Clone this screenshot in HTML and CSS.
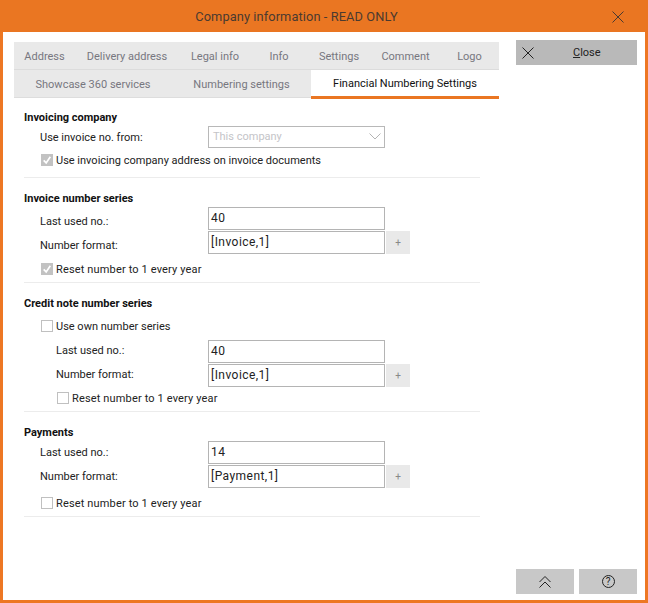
FILE: index.html
```html
<!DOCTYPE html>
<html lang="en">

<head>
  <meta charset="UTF-8">
  <title>Company information</title>
  <link rel="stylesheet" href="styles.css">
</head>

<body>
  <div class="window">
    <div class="titlebar">
      <span class="title">Company information - READ ONLY</span>
      <svg class="title-close" width="12" height="12" viewBox="0 0 12 12"><path d="M.5.5l11 11M11.5.5l-11 11" stroke="#4a3a30" fill="none"/></svg>
    </div>
    <div class="content">
      <div class="main">
        <div class="tab-row">
          <div class="tab tab-1">Address</div>
          <div class="tab tab-2">Delivery address</div>
          <div class="tab tab-3">Legal info</div>
          <div class="tab tab-4">Info</div>
          <div class="tab tab-5">Settings</div>
          <div class="tab tab-6">Comment</div>
          <div class="tab tab-7">Logo</div>
        </div>
        <div class="tab-row tab-row-two">
          <div class="tab tab-8">Showcase 360 services</div>
          <div class="tab tab-9">Numbering settings</div>
          <div class="tab tab-active">Financial Numbering Settings</div>
        </div>

        <div class="form">
          <section class="group group-first">
            <h3>Invoicing company</h3>
            <div class="row">
              <label>Use invoice no. from:</label>
              <div class="select">
                <span>This company</span>
                <svg width="12" height="7" viewBox="0 0 12 7"><path d="M.5.5l5.5 5.5 5.5-5.5" stroke="#b4b4b4" fill="none"/></svg>
              </div>
            </div>
            <div class="check-row">
              <span class="check checked"><svg width="12" height="12" viewBox="0 0 12 12"><path d="M2 6.5l3 3 5-7.5" stroke="#fff" stroke-width="2" fill="none"/></svg></span>
              Use invoicing company address on invoice documents
            </div>
          </section>

          <section class="group">
            <h3>Invoice number series</h3>
            <div class="rows rows-invoice">
              <div class="row">
                <label>Last used no.:</label>
                <div class="input">40</div>
              </div>
              <div class="row">
                <label>Number format:</label>
                <div class="input">[Invoice,1]</div>
                <div class="plus">+</div>
              </div>
            </div>
            <div class="check-row reset">
              <span class="check checked"><svg width="12" height="12" viewBox="0 0 12 12"><path d="M2 6.5l3 3 5-7.5" stroke="#fff" stroke-width="2" fill="none"/></svg></span>
              Reset number to 1 every year
            </div>
          </section>

          <section class="group group-credit">
            <h3>Credit note number series</h3>
            <div class="check-row check-row-own">
              <span class="check"></span>
              Use own number series
            </div>
            <div class="rows rows-indent">
              <div class="row">
                <label>Last used no.:</label>
                <div class="input">40</div>
              </div>
              <div class="row">
                <label>Number format:</label>
                <div class="input">[Invoice,1]</div>
                <div class="plus">+</div>
              </div>
            </div>
            <div class="check-row check-row-indent">
              <span class="check"></span>
              Reset number to 1 every year
            </div>
          </section>

          <section class="group">
            <h3>Payments</h3>
            <div class="rows rows-payment">
              <div class="row">
                <label>Last used no.:</label>
                <div class="input">14</div>
              </div>
              <div class="row">
                <label>Number format:</label>
                <div class="input">[Payment,1]</div>
                <div class="plus">+</div>
              </div>
            </div>
            <div class="check-row reset">
              <span class="check"></span>
              Reset number to 1 every year
            </div>
          </section>
        </div>
      </div>

      <div class="side">
        <button class="close-btn">
          <svg width="12" height="12" viewBox="0 0 12 12"><path d="M.5.5l11 11M11.5.5l-11 11" stroke="#222" fill="none"/></svg>
          <span><u>C</u>lose</span>
        </button>
        <div class="side-bottom">
          <button class="small-btn">
            <svg width="12" height="12" viewBox="0 0 12 12"><path d="M.5 6l5.5-5.5 5.5 5.5M.5 11.5l5.5-5.5 5.5 5.5" stroke="#222" fill="none"/></svg>
          </button>
          <button class="small-btn"><span class="help-icon">?</span></button>
        </div>
      </div>
    </div>
  </div>
</body>

</html>
```

FILE: styles.css
```css
* {
  margin: 0;
  padding: 0;
  box-sizing: border-box;
}

body {
  width: 648px;
  height: 603px;
  overflow: hidden;
  font-family: "Roboto", "Liberation Sans", sans-serif;
  font-size: 11px;
  color: #222222;
  background-color: #ffffff;
}

.window {
  width: 648px;
  height: 603px;
  border: 3px solid #ed7723;
  border-top: none;
  display: flex;
  flex-direction: column;
}

.titlebar {
  height: 32px;
  flex-shrink: 0;
  margin: 0 -3px;
  background-color: #ea7622;
  display: flex;
  align-items: center;
  justify-content: center;
  position: relative;
}

.title {
  font-size: 12.8px;
  color: #4a3a30;
  letter-spacing: 0.1px;
  margin-right: 55px;
}

.title-close {
  position: absolute;
  right: 24px;
  top: 11px;
}

.content {
  flex: 1;
  display: flex;
  background-color: #ffffff;
}

.main {
  width: 513px;
  padding: 10px 0 0 11px;
}

/* tabs */
.tab-row {
  width: 485px;
  height: 27px;
  padding-top: 1px;
  display: flex;
  background-color: #e9e9e9;
  color: #77777f;
}

.tab-row-two {
  height: 29px;
  padding-top: 0;
  border-top: 1px solid #dcdcdc;
  border-bottom: 1px solid #dddddd;
}

.tab {
  display: flex;
  align-items: center;
  justify-content: center;
}

.tab-1 { width: 61px; }
.tab-2 { width: 104px; }
.tab-3 { width: 72px; }
.tab-4 { width: 56px; }
.tab-5 { width: 64px; }
.tab-6 { width: 69px; }
.tab-7 { width: 59px; }
.tab-8 { width: 158px; padding-top: 1px; }
.tab-9 { width: 139px; padding-top: 1px; }

.tab-active {
  flex: 1;
  margin-bottom: -2px;
  background-color: #ffffff;
  color: #111111;
  border-bottom: 3px solid #ea7622;
}

/* form */
.form {
  padding: 11px 0 0 10px;
}

.group {
  width: 456px;
  padding-bottom: 2px;
  border-bottom: 1px solid #ececec;
  margin-bottom: 12px;
}

.group-first {
  padding-bottom: 6px;
}

.group-credit {
  padding-bottom: 3px;
}

.group h3 {
  font-size: 11px;
  font-weight: 700;
  color: #111111;
  line-height: 18px;
  height: 16px;
}

.rows {
  padding-top: 1px;
}

.row {
  display: flex;
  align-items: center;
  height: 24px;
  padding-left: 16px;
}

.row label {
  width: 168px;
}

.rows-invoice label {
  padding-top: 4px;
}

.rows-payment label {
  padding-bottom: 2px;
}

.rows-indent {
  padding-top: 3px;
}

.rows-indent .row {
  padding-left: 32px;
}

.rows-indent label {
  width: 152px;
  padding-bottom: 4px;
}

.input {
  width: 177px;
  height: 23px;
  align-self: flex-start;
  border: 1px solid #b4b4b4;
  padding-left: 2px;
  font-size: 12px;
  letter-spacing: 0.45px;
  line-height: 20px;
  color: #222222;
  background-color: #ffffff;
}

.select {
  width: 177px;
  height: 22px;
  border: 1px solid #b8b8b8;
  padding: 0 3px 2px 4px;
  display: flex;
  align-items: center;
  justify-content: space-between;
  color: #c4c4c8;
}

.plus {
  width: 24px;
  height: 23px;
  align-self: flex-start;
  margin-left: 1px;
  font-size: 10px;
  background-color: #e9e9e9;
  color: #888888;
  display: flex;
  align-items: center;
  justify-content: center;
}

.check-row {
  display: flex;
  align-items: center;
  gap: 3px;
  height: 22px;
  padding-left: 17px;
}

.reset {
  margin-top: 3px;
  letter-spacing: 0.15px;
}

.check-row-own {
  margin-top: 4px;
}

.check-row-indent {
  height: 20px;
  padding-left: 33px;
  letter-spacing: 0.15px;
}

.check {
  width: 12px;
  height: 12px;
  border: 1px solid #c0c0c0;
  background-color: #ffffff;
  display: flex;
  align-items: center;
  justify-content: center;
  flex-shrink: 0;
}

.checked {
  background-color: #c2c2c2;
  border-color: #c2c2c2;
}

/* right column */
.side {
  width: 121px;
  padding: 8px 0 6px;
  display: flex;
  flex-direction: column;
  justify-content: space-between;
}

button {
  border: none;
  font-family: inherit;
  font-size: 11px;
  color: #222222;
}

.close-btn {
  width: 121px;
  height: 25px;
  background-color: #b9b9b9;
  display: flex;
  align-items: center;
  padding-left: 6px;
}

.close-btn span {
  margin-left: 39px;
}

.side-bottom {
  display: flex;
  justify-content: space-between;
}

.small-btn {
  width: 58px;
  height: 25px;
  background-color: #c8c8c8;
  display: flex;
  align-items: center;
  justify-content: center;
}

.help-icon {
  width: 13px;
  height: 13px;
  border: 1px solid #222222;
  border-radius: 50%;
  font-size: 10px;
  line-height: 11px;
  text-align: center;
}
```
